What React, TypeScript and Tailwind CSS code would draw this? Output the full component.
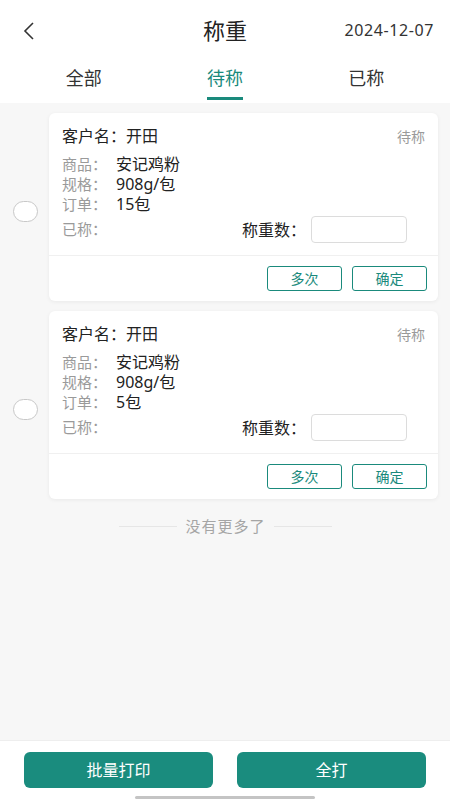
import * as React from 'react'

interface TOrder {
  id: number
  customer: string
  product: string
  spec: string
  qty: string
}

const orders: TOrder[] = [
  { id: 1, customer: '开田', product: '安记鸡粉', spec: '908g/包', qty: '15包' },
  { id: 2, customer: '开田', product: '安记鸡粉', spec: '908g/包', qty: '5包' },
]

const tabs = ['全部', '待称', '已称']

const OrderCard = ({ item }: { item: TOrder }) => (
  <div className="flex items-center">
    <div className="w-[49px] flex justify-center">
      <div className="w-[25px] h-[21px] mt-[9px] rounded-full border border-[#c8c8c8] bg-white ml-[1px]" />
    </div>
    <div className="flex-1 mr-[12px] bg-white rounded-md shadow-[0_1px_4px_rgba(0,0,0,0.06)]">
      <div className="px-[13px] pt-[14px] pb-[12px] border-b border-[#f0f0f0]">
        <div className="flex items-center justify-between h-[18px]">
          <span className="text-[16px] text-[#222]">客户名：开田</span>
          <span className="text-[14px] text-[#9a9a9a]">待称</span>
        </div>
        <div className="mt-[9px] leading-[20px]">
          <div className="flex items-center">
            <span className="w-[54px] text-[15px] text-[#9a9a9a]">商品：</span>
            <span className="text-[16px] text-[#222]">{item.product}</span>
          </div>
          <div className="flex items-center">
            <span className="w-[54px] text-[15px] text-[#9a9a9a]">规格：</span>
            <span className="text-[16px] text-[#222]">{item.spec}</span>
          </div>
          <div className="flex items-center">
            <span className="w-[54px] text-[15px] text-[#9a9a9a]">订单：</span>
            <span className="text-[16px] text-[#222]">{item.qty}</span>
          </div>
        </div>
        <div className="mt-[2px] flex items-center justify-between">
          <span className="text-[15px] text-[#9a9a9a]">已称：</span>
          <div className="flex items-center mr-[18px]">
            <span className="text-[16px] text-[#222] mr-[5px]">称重数：</span>
            <div className="w-[96px] h-[27px] rounded border border-[#dcdcdc] bg-white" />
          </div>
        </div>
      </div>
      <div className="flex justify-end gap-[10px] px-[11px] pt-[10px] pb-[10px]">
        <button className="w-[75px] h-[25px] rounded-[3px] border border-[#1a8a7c] text-[14px] text-[#1a8a7c] bg-white">
          多次
        </button>
        <button className="w-[75px] h-[25px] rounded-[3px] border border-[#1a8a7c] text-[14px] text-[#1a8a7c] bg-white">
          确定
        </button>
      </div>
    </div>
  </div>
)

const App = () => {
  return (
    <div
      className="w-[450px] h-[800px] bg-[#f7f7f7] flex flex-col overflow-hidden"
      style={{ fontFamily: '"Noto Sans", "Noto Sans CJK SC", sans-serif' }}
    >
      <div className="bg-white">
        <div className="h-[60px] flex items-center px-[22px] relative">
          <svg width="14" height="20" viewBox="0 0 14 20" className="mt-[1px]">
            <path d="M11 2 L3 10 L11 18" fill="none" stroke="#333" strokeWidth="1.6" />
          </svg>
          <span className="absolute left-1/2 -translate-x-1/2 text-[22px] text-[#222]">称重</span>
          <span className="ml-auto text-[16px] text-[#333] tracking-[0.6px] -mr-[6px]">2024-12-07</span>
        </div>
        <div className="h-[43px] flex px-[13px]">
          {tabs.map((t, i) => (
            <div key={t} className="flex-1 flex flex-col items-center pt-[5px]">
              <span className={`text-[18px] ${i === 1 ? 'text-[#1a8a7c]' : 'text-[#333]'}`}>{t}</span>
              {i === 1 && <div className="mt-[5px] w-[36px] h-[3px] bg-[#1a8a7c]" />}
            </div>
          ))}
        </div>
      </div>

      <div className="flex-1 flex flex-col gap-[10px] pt-[10px]">
        {orders.map((item) => (
          <OrderCard key={item.id} item={item} />
        ))}
        <div className="flex items-center justify-center gap-[8px] mt-[6px] ml-[1px]">
          <div className="w-[58px] h-px bg-[#e6e6e6]" />
          <span className="text-[15px] tracking-[1px] text-[#a5a5a5]">没有更多了</span>
          <div className="w-[58px] h-px bg-[#e6e6e6]" />
        </div>
      </div>

      <div className="bg-white h-[60px] flex flex-col border-t border-[#eeeeee]">
        <div className="flex gap-[24px] px-[24px] pt-[11px]">
          <button className="flex-1 h-[36px] rounded-md bg-[#1a8c7e] text-white text-[16px]">批量打印</button>
          <button className="flex-1 h-[36px] rounded-md bg-[#1a8c7e] text-white text-[16px]">全打</button>
        </div>
        <div className="mx-auto mt-[8px] w-[180px] h-[3px] rounded-full bg-[#c4c4c4]" />
      </div>
    </div>
  )
}

export default App
